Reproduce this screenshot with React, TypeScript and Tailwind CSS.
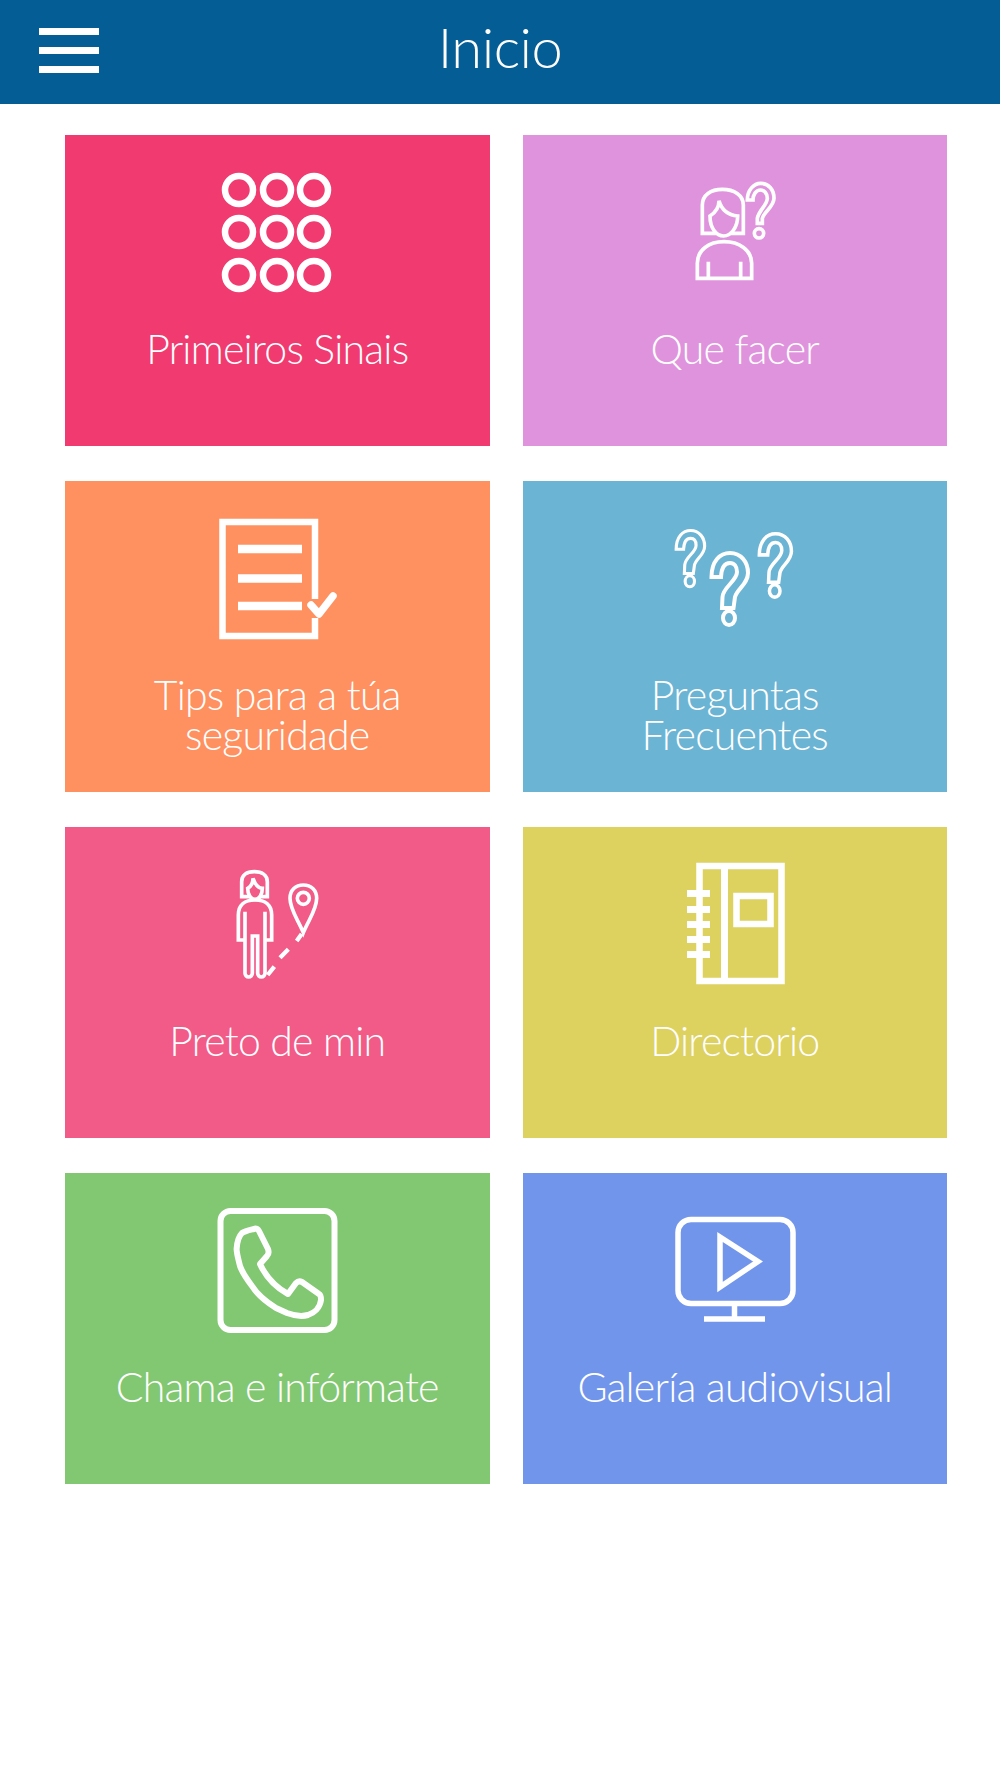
import React from 'react';

const Dots = () => {
  const xs = [17, 55, 92];
  const ys = [18, 60, 103];
  return (
    <svg width="112" height="122" viewBox="0 0 112 122" className="mt-[37px]" fill="none" stroke="white" strokeWidth="6.500">
      {ys.map((y) => xs.map((x) => <circle key={`${x}-${y}`} cx={x + 1} cy={y} r="14" />))}
    </svg>
  );
};

const Woman = () => (
  <svg width="120" height="120" viewBox="0 0 360 360" className="mt-[35px] ml-[8px]" fill="none" stroke="white" strokeWidth="11" strokeLinejoin="miter">
    <path d="M112 190 H70 V105 C70 75 95 58 130 58 C165 58 193 75 193 105 V190 H155" />
    <path d="M120 92 C120 115 108 128 93 138 C93 175 112 198 134 198 C156 198 176 172 176 138 C150 135 128 120 120 92 Z" />
    <path d="M55 325 V280 C55 240 90 215 135 215 C180 215 218 240 218 280 V325 Z" />
    <path d="M88 275 V325 M185 275 V325" />
    <path d="M205 90 C205 60 225 40 245 40 C270 40 285 60 285 85 C285 110 255 125 250 145 V160 H235 V145 C240 120 265 105 265 85 C265 70 255 60 245 60 C230 60 222 75 222 90 Z" />
    <circle cx="240" cy="190" r="14" />
  </svg>
);

const Checklist = () => (
  <svg width="121" height="126" viewBox="0 0 121 126" className="mt-[35px]" fill="none" stroke="white">
    <path d="M98 83 V6 H5.5 V120 H98 V102" strokeWidth="6.5" />
    <path d="M21 33 H85 M21 62.500 H85 M21 90 H85" strokeWidth="8.500" />
    <path d="M94 89 L102 98 L116 80" strokeWidth="7.500" strokeLinejoin="round" strokeLinecap="round" />
  </svg>
);

const Question = ({ x, y, scale }: { x: number; y: number; scale: number }) => (
  <g transform={`translate(${x} ${y}) scale(${scale})`}>
    <path d="M1.500 26 C1.500 10 10 2 20 2 C31 2 38 11 38 22 C38 33 27 38 25 46 L23.500 57 H12 L12.500 46 C13 36 27 30 27 21 C27 15 24 12 20 12 C15 12 11.500 16 11 26 Z" />
    <ellipse cx="19" cy="67" rx="6" ry="7" />
  </g>
);

const Questions = () => (
  <svg width="124" height="103" viewBox="0 0 124 103" className="mt-[46px]" fill="none" stroke="white" strokeWidth="4">
    <Question x={2} y={2} scale={0.78} />
    <Question x={37} y={24} scale={1} />
    <Question x={85} y={5} scale={0.88} />
  </svg>
);

const PersonPin = () => (
  <svg width="120" height="130" viewBox="0 0 360 390" className="mt-[33px] ml-[15px]" fill="none" stroke="white" strokeWidth="11">
    <path d="M72 110 H50 V65 C50 45 65 35 88 35 C110 35 127 45 127 65 V110 H105" />
    <path d="M84 55 C84 70 78 80 68 85 C68 105 78 118 90 118 C102 118 112 105 112 85 C100 85 90 72 84 55 Z" />
    <path d="M60 240 H40 V165 C40 135 60 120 90 120 C120 120 140 135 140 165 V240 H120 M60 155 V340 A11 11 0 0 0 82 340 V228 H98 V340 A11 11 0 0 0 120 340 V155" />
    <path d="M235 218 C220 180 195 150 195 115 C195 90 212 75 235 75 C258 75 275 90 275 115 C275 150 250 180 235 218 Z" />
    <circle cx="235" cy="115" r="18" />
    <path d="M230 222 L215 243 M190 268 L165 293 M148 320 L128 345" strokeWidth="13" />
  </svg>
);

const Notebook = () => (
  <svg width="102" height="126" viewBox="0 0 102 126" className="mt-[34px] ml-[3px]" fill="none" stroke="white">
    <rect x="14.500" y="5" width="82" height="115" strokeWidth="6.500" />
    <path d="M39.500 5 V120" strokeWidth="7" />
    <rect x="51.500" y="35" width="34" height="28" strokeWidth="6.500" />
    <path d="M2 32.500 H25 M2 48.500 H25 M2 63.500 H25 M2 78.500 H25 M2 93.500 H25" strokeWidth="7" />
  </svg>
);

const Phone = () => (
  <svg width="121" height="125" viewBox="0 0 121 125" className="mt-[35px]" fill="none" stroke="white" strokeLinejoin="round">
    <rect x="3.500" y="3" width="114" height="119" rx="10" strokeWidth="6" />
    <path d="M37 21 C39 20 41 21 42 23 L51 41 C52 44 52 46 50 48 L43 56 C49 69 58 79 71 86 L79 75 C81 73 83 73 85 74 L102 86 C104 87 104 89 104 92 C103 100 97 105 91 107 C84 109 78 108 70 105 L59 100 C48 93 40 86 35 78 C29 70 25 64 23 58 C21 50 19.600 45 19.600 41 C20 34 22 28 25 25 C28 23 33 22 37 21 Z" strokeWidth="6" />
  </svg>
);

const Monitor = () => (
  <svg width="123" height="107" viewBox="0 0 123 107" className="mt-[43px] ml-[1px]" fill="none" stroke="white" strokeWidth="5.500">
    <rect x="4" y="3.500" width="115" height="84" rx="13" />
    <path d="M46 21 V71 L84 45.500 Z" />
    <path d="M60.500 88 V102 M30 103 H91" />
  </svg>
);

const tiles = [
  { label: ['Primeiros Sinais'], bg: 'bg-[#f03a70]', icon: <Dots /> },
  { label: ['Que facer'], bg: 'bg-[#e093dd]', icon: <Woman /> },
  { label: ['Tips para a túa', 'seguridade'], bg: 'bg-[#ff905f]', icon: <Checklist /> },
  { label: ['Preguntas', 'Frecuentes'], bg: 'bg-[#6bb4d4]', icon: <Questions /> },
  { label: ['Preto de min'], bg: 'bg-[#f25a88]', icon: <PersonPin /> },
  { label: ['Directorio'], bg: 'bg-[#ddd160]', icon: <Notebook /> },
  { label: ['Chama e infórmate'], bg: 'bg-[#82c772]', icon: <Phone /> },
  { label: ['Galería audiovisual'], bg: 'bg-[#7295ec]', icon: <Monitor /> },
];

const App: React.FC = () => {
  return (
    <div className="min-h-[1778px] bg-white font-['Lato',sans-serif] font-light text-white">
      <header className="h-[104px] bg-[#045d94] flex items-center justify-center relative">
        <button className="absolute left-[39px] top-[28px] w-[60px] flex flex-col gap-[12px]">
          <span className="block h-[7px] bg-white" />
          <span className="block h-[7px] bg-white" />
          <span className="block h-[7px] bg-white" />
        </button>
        <h1 className="text-[56px] leading-none font-light tracking-[-0.5px] -mt-[10px]">Inicio</h1>
      </header>

      <div className="grid grid-cols-2 gap-x-[33px] gap-y-[35px] w-[882px] ml-[65px] mt-[31px]">
        {tiles.map((tile) => (
          <div key={tile.label[0]} className={`h-[311px] flex flex-col items-center ${tile.bg}`}>
            <div className="h-[194px] shrink-0 flex items-start justify-center">{tile.icon}</div>
            <div className="text-[41px] leading-[40px] tracking-[-0.8px] text-center">
              {tile.label.map((line) => (
                <div key={line}>{line}</div>
              ))}
            </div>
          </div>
        ))}
      </div>
    </div>
  );
};

export default App;
